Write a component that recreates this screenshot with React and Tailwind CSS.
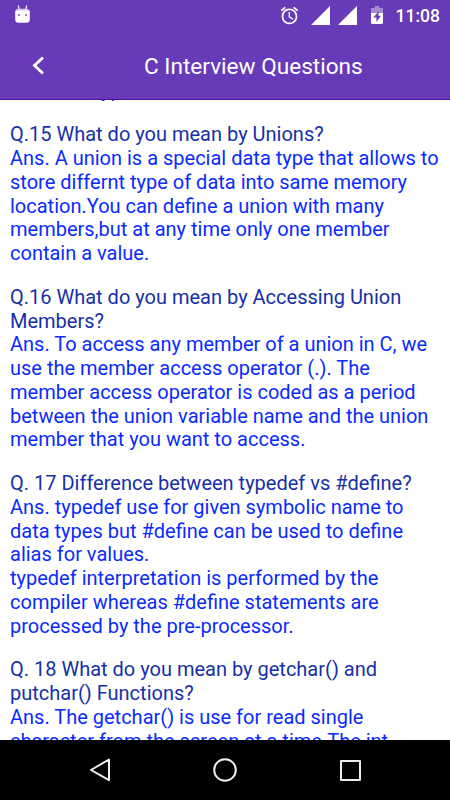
import React from 'react';

const entries = [
  {
    question: ['Q.15 What do you mean by Unions?'],
    answer: [
      'Ans. A union is a special data type that allows to',
      'store differnt type of data into same memory',
      'location.You can define a union with many',
      'members,but at any time only one member',
      'contain a value.',
    ],
  },
  {
    question: ['Q.16 What do you mean by Accessing Union', 'Members?'],
    answer: [
      'Ans. To access any member of a union in C, we',
      'use the member access operator (.). The',
      'member access operator is coded as a period',
      'between the union variable name and the union',
      'member that you want to access.',
    ],
  },
  {
    question: ['Q. 17 Difference between typedef vs #define?'],
    answer: [
      'Ans. typedef use for given symbolic name to',
      'data types but #define can be used to define',
      'alias for values.',
      'typedef interpretation is performed by the',
      'compiler whereas #define statements are',
      'processed by the pre-processor.',
    ],
  },
  {
    question: ['Q. 18 What do you mean by getchar() and', 'putchar() Functions?'],
    answer: [
      'Ans. The getchar() is use for read single',
      'character from the screen at a time.The int',
    ],
  },
];

function StatusBar() {
  return (
    <div className="flex h-8 shrink-0 items-center justify-between pl-[15px] pr-[10px]">
      <svg className="-mt-[5px] h-[18px] w-[15px]" viewBox="0 0 15 18" fill="none">
        <path d="M3.2 0.5l1.1 4M11.8 0.5l-1.1 4" stroke="#fff" strokeWidth="1.1" />
        <path d="M0.4 6c0.4-1.6 1.8-2.2 3.6-2.2h7c1.8 0 3.2 0.6 3.6 2.2z" fill="#d7cbec" />
        <path d="M0.2 5.8h14.6v8.8c0 2-1 3.2-3 3.2H3.2c-2 0-3-1.2-3-3.2z" fill="#fff" />
        <path d="M3 9h2v2H3zM10 9h2v2h-2z" fill="#9f85d0" />
      </svg>
      <div className="flex h-full items-center">
        <svg className="-mt-[1px] h-[21px] w-[21px]" viewBox="0 0 24 24" fill="#fff">
          <path d="M22 5.72l-4.6-3.86-1.29 1.53 4.6 3.86L22 5.72zM7.88 3.39L6.6 1.86 2 5.71l1.29 1.53 4.59-3.85zM12.5 8H11v6l4.75 2.85.75-1.23-4-2.37V8zM12 4c-4.97 0-9 4.03-9 9s4.02 9 9 9a9 9 0 0 0 0-18zm0 16c-3.87 0-7-3.13-7-7s3.13-7 7-7 7 3.13 7 7-3.13 7-7 7z" />
        </svg>
        <svg className="ml-[11px] -mt-[1px] h-[19px] w-[19px]" viewBox="0 0 19 19" fill="#fff"><path d="M0 19L19 0v19z" /></svg>
        <svg className="ml-[8px] -mt-[1px] h-[19px] w-[19px]" viewBox="0 0 19 19" fill="#fff"><path d="M0 19L19 0v19z" /></svg>
        <svg className="ml-[14px] -mt-[2px] h-[18px] w-[12px]" viewBox="0 0 12 18">
          <path d="M3.7 0h4.6v2H12v5H0V2h3.7z" fill="#a48bd3" />
          <path d="M0 7h12v10L11 18H1l-1-1z" fill="#fff" />
          <path d="M8 5L2.2 11.5h3.2v4.5l4.6-6.2H7.2z" fill="#673ab7" />
        </svg>
        <span className="ml-[13px] mt-px text-[17.5px] font-medium leading-none">11:08</span>
      </div>
    </div>
  );
}

export default function App() {
  return (
    <div className="flex h-[800px] w-[450px] flex-col overflow-hidden bg-white font-['Roboto',sans-serif]">
      <header className="flex h-[100px] shrink-0 flex-col border-b border-[#4a0f9f] bg-[#673ab7] text-white">
        <StatusBar />
        <div className="flex h-[67px] items-center">
          <svg className="-mt-px ml-8 h-[19px] w-[13px]" viewBox="0 0 13 19" fill="none" stroke="#fff" strokeWidth="2.8">
            <path d="M11 1.5L2.5 9.5l8.5 8" />
          </svg>
          <h1 className="ml-[99px] mt-[3px] whitespace-nowrap text-[22.6px] leading-none">C Interview Questions</h1>
        </div>
      </header>
      <main className="flex min-h-0 flex-1 flex-col overflow-hidden pl-[10px] text-[20px] leading-[23.75px]">
        <p className="-mt-[20.7px] mb-[20.3px] shrink-0 whitespace-nowrap text-[#0a2bff]">that data type.</p>
        {entries.map((entry) => (
          <section key={entry.question[0]} className="mb-[20px] shrink-0 whitespace-nowrap">
            <h2 className="text-[#1530a8]">
              {entry.question.map((line) => <span key={line} className="block">{line}</span>)}
            </h2>
            <p className="text-[#0a2bff]">
              {entry.answer.map((line) => <span key={line} className="block">{line}</span>)}
            </p>
          </section>
        ))}
      </main>
      <nav className="flex h-[60px] shrink-0 items-center bg-black">
        <svg className="ml-[89px] h-6 w-[22px]" viewBox="0 0 22 24" fill="none" stroke="#eee" strokeWidth="2" strokeLinejoin="round">
          <path d="M20 1.5v20.7L2 12z" />
        </svg>
        <svg className="ml-[102px] h-6 w-6" viewBox="0 0 24 24" fill="none" stroke="#eee" strokeWidth="2">
          <circle cx="12" cy="12" r="10.8" />
        </svg>
        <div className="ml-[102.5px] h-[21px] w-[21px] rounded-[1px] border-2 border-[#eee]" />
      </nav>
    </div>
  );
}
